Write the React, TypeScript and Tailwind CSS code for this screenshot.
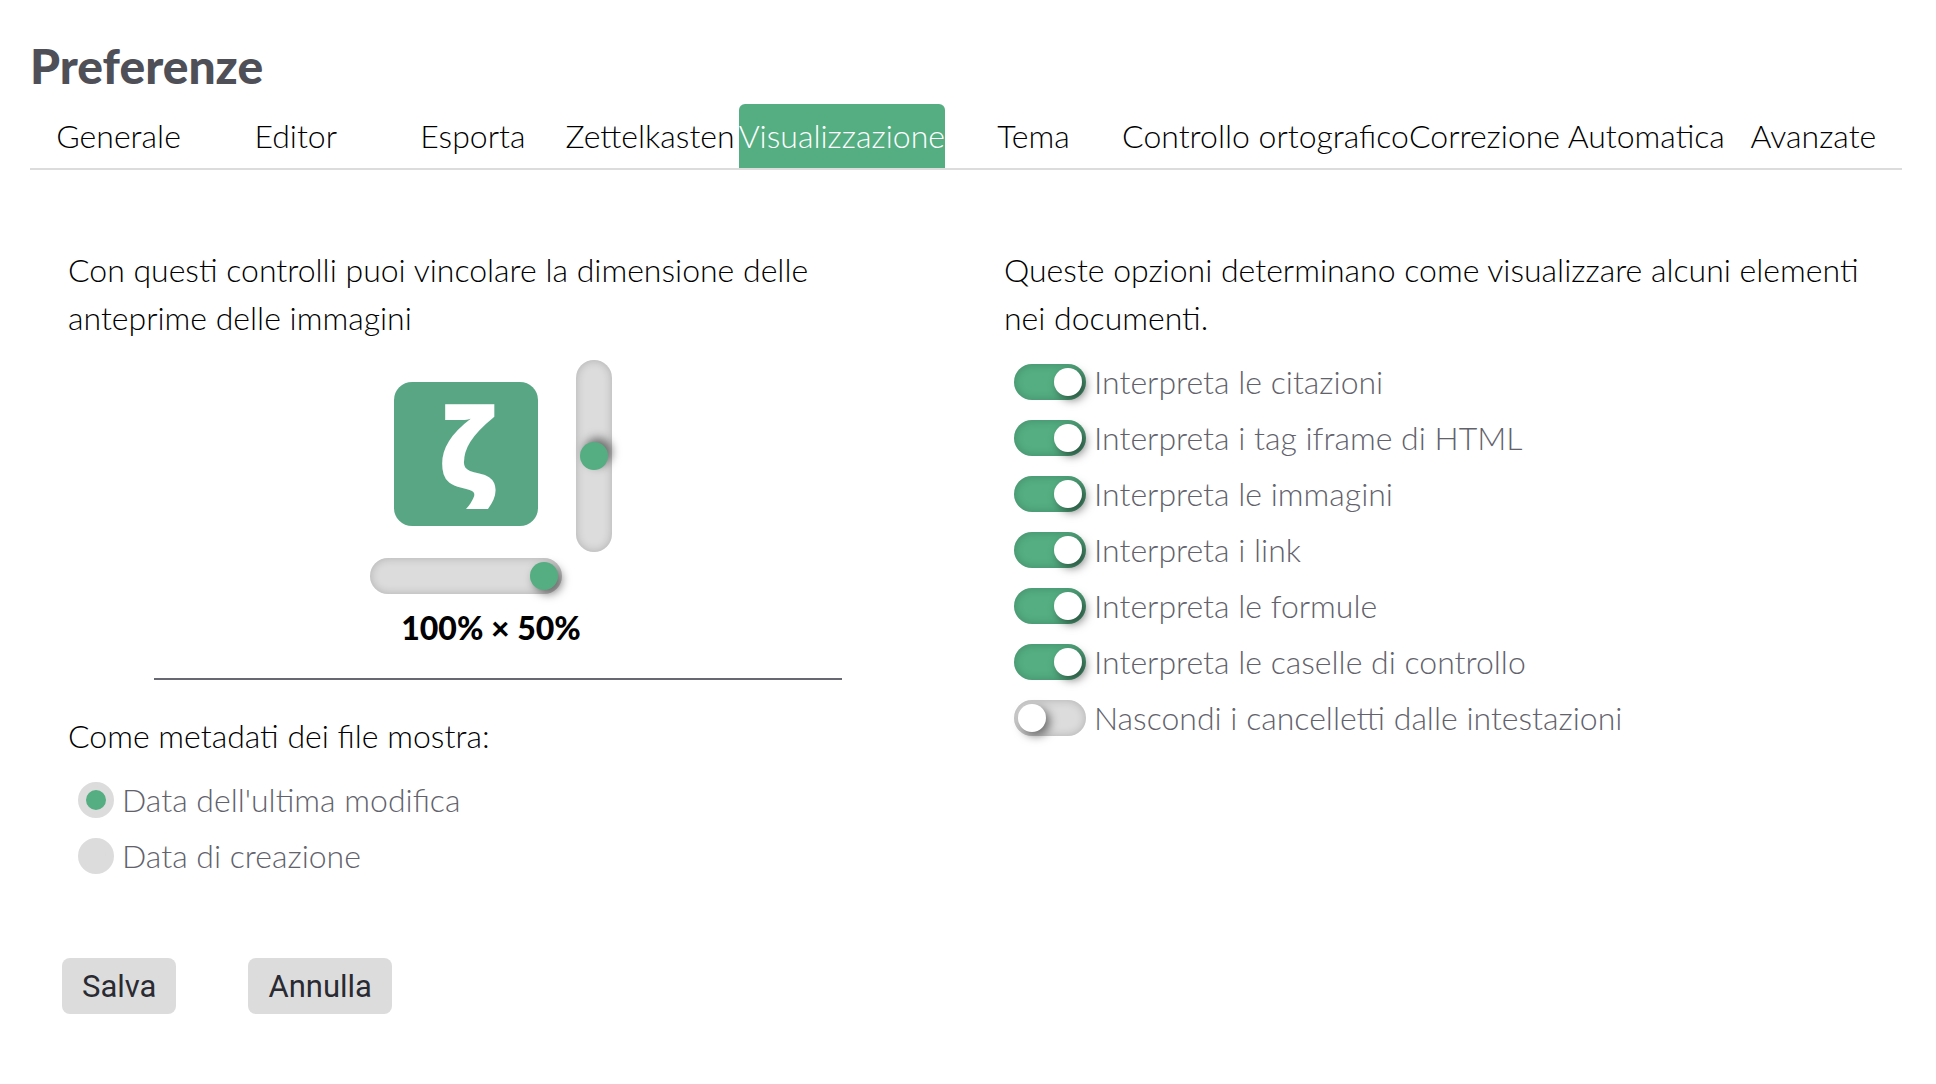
import { useState } from "react";

const tabs = [
  "Generale",
  "Editor",
  "Esporta",
  "Zettelkasten",
  "Visualizzazione",
  "Tema",
  "Controllo ortografico",
  "Correzione Automatica",
  "Avanzate",
];

const options = [
  { id: "citations", label: "Interpreta le citazioni", on: true },
  { id: "iframes", label: "Interpreta i tag iframe di HTML", on: true },
  { id: "images", label: "Interpreta le immagini", on: true },
  { id: "links", label: "Interpreta i link", on: true },
  { id: "math", label: "Interpreta le formule", on: true },
  { id: "tasks", label: "Interpreta le caselle di controllo", on: true },
  { id: "headings", label: "Nascondi i cancelletti dalle intestazioni", on: false },
];

const metadata = [
  { id: "modtime", label: "Data dell'ultima modifica" },
  { id: "creationtime", label: "Data di creazione" },
];

function Switch({ id, label, on }: { id: string; label: string; on: boolean }) {
  return (
    <div className="flex h-14 items-center gap-2 pl-2.5">
      <input
        id={id}
        type="checkbox"
        role="switch"
        defaultChecked={on}
        className="h-9 w-[72px] shrink-0 appearance-none rounded-full bg-[#dcdcdc] p-1 shadow-[inset_0_0_10px_rgba(0,0,0,0.2)] before:block before:size-7 before:rounded-full before:bg-white before:shadow-[4px_4px_10px_rgba(0,0,0,0.5)] checked:bg-[#54ae82] checked:before:ml-9"
      />
      <label htmlFor={id} className="text-[#62626c]">
        {label}
      </label>
    </div>
  );
}

function Tabs() {
  const [active, setActive] = useState(4);
  return (
    <div role="tablist" className="mt-1.5 flex border-b-2 border-[#dcdcdc]">
      {tabs.map((tab, i) => (
        <button
          key={tab}
          type="button"
          role="tab"
          aria-selected={i === active}
          onClick={() => setActive(i)}
          className="h-16 flex-1 whitespace-nowrap rounded-t-md text-center aria-selected:bg-[#54ae82] aria-selected:text-white"
        >
          {tab}
        </button>
      ))}
    </div>
  );
}

function ImagePreview() {
  const [width, setWidth] = useState(100);
  const [height, setHeight] = useState(50);
  return (
    <div className="mt-[18px] flex justify-center pr-3.5">
      <div className="grid grid-cols-[192px_36px] gap-x-3.5 gap-y-1.5">
        <div className="flex items-center justify-center pb-1">
          <div
            aria-hidden="true"
            className="flex size-36 items-center justify-center rounded-[18px] bg-[#58a684] pb-4 font-['Open_Sans',sans-serif] text-[112px] leading-none font-extrabold text-white"
          >
            ζ
          </div>
        </div>
        <input
          type="range"
          aria-label="Altezza massima"
          min={0}
          max={100}
          value={height}
          onChange={(e) => setHeight(Number(e.target.value))}
          className="h-48 w-9 appearance-none rounded-full bg-[#dcdcdc] p-1 shadow-[inset_0_0_10px_rgba(0,0,0,0.2)] [direction:rtl] [writing-mode:vertical-lr] [&::-webkit-slider-thumb]:size-7 [&::-webkit-slider-thumb]:appearance-none [&::-webkit-slider-thumb]:rounded-full [&::-webkit-slider-thumb]:bg-[#54ae82] [&::-webkit-slider-thumb]:shadow-[4px_-4px_10px_rgba(0,0,0,0.5)]"
        />
        <input
          type="range"
          aria-label="Larghezza massima"
          min={0}
          max={100}
          value={width}
          onChange={(e) => setWidth(Number(e.target.value))}
          className="h-9 w-48 appearance-none rounded-full bg-[#dcdcdc] p-1 shadow-[inset_0_0_10px_rgba(0,0,0,0.2)] [&::-webkit-slider-thumb]:size-7 [&::-webkit-slider-thumb]:appearance-none [&::-webkit-slider-thumb]:rounded-full [&::-webkit-slider-thumb]:bg-[#54ae82] [&::-webkit-slider-thumb]:shadow-[4px_4px_10px_rgba(0,0,0,0.5)]"
        />
        <output className="col-span-2 mt-1 text-center font-black">
          {`${width}% × ${height}%`}
        </output>
      </div>
    </div>
  );
}

export default function App() {
  return (
    <main className="min-h-screen bg-white pt-[34px] pr-[34px] pb-8 pl-[30px] font-[Lato,sans-serif] text-[32px] leading-[48px] font-light text-black">
      <h1 className="text-[48px] leading-[64px] font-black text-[#4f4f58]">Preferenze</h1>
      <Tabs />
      <div className="grid grid-cols-2 pt-[76px]">
        <section className="px-[38px]">
          <p>Con questi controlli puoi vincolare la dimensione delle anteprime delle immagini</p>
          <ImagePreview />
          <hr className="mx-auto mt-[26px] w-4/5 border-t-2 border-[#686872]" />
          <fieldset className="pt-8">
            <legend className="contents">Come metadati dei file mostra:</legend>
            <div className="pt-3">
              {metadata.map((item, i) => (
                <div key={item.id} className="flex h-14 items-center gap-2 pl-2.5">
                  <input
                    id={item.id}
                    type="radio"
                    name="metadata"
                    defaultChecked={i === 0}
                    className="size-9 shrink-0 appearance-none rounded-full border-8 border-[#dcdcdc] bg-[#dcdcdc] checked:bg-[#54ae82]"
                  />
                  <label htmlFor={item.id} className="text-[#62626c]">
                    {item.label}
                  </label>
                </div>
              ))}
            </div>
          </fieldset>
        </section>
        <section className="px-[38px]">
          <p className="mb-3">
            Queste opzioni determinano come visualizzare alcuni elementi nei documenti.
          </p>
          {options.map((option) => (
            <Switch key={option.id} {...option} />
          ))}
        </section>
      </div>
      <div className="mt-[74px] flex gap-[72px] px-8 font-[Roboto,sans-serif] text-[31px] font-normal text-[#2a2a32]">
        <button type="submit" className="h-14 rounded-lg bg-[#dcdcdc] px-5 pt-0.5">
          Salva
        </button>
        <button type="button" className="h-14 rounded-lg bg-[#dcdcdc] px-5 pt-0.5">
          Annulla
        </button>
      </div>
    </main>
  );
}
